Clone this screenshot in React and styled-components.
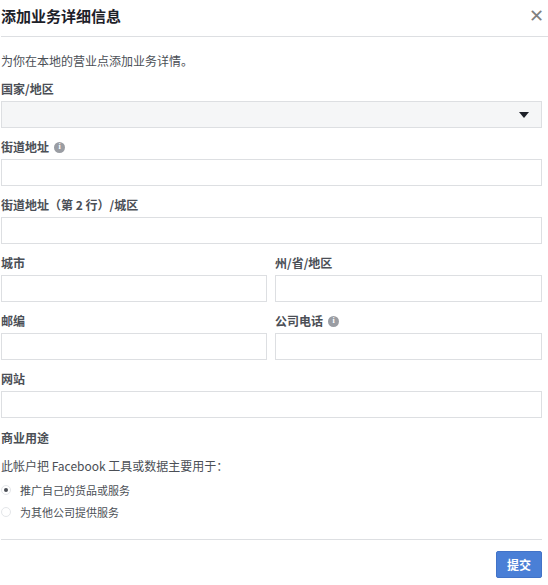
import React from "react";
import styled, { createGlobalStyle } from "styled-components";

const Global = createGlobalStyle`
  body { margin: 0; background: #fff; font-family: "Microsoft YaHei", "Noto Sans CJK SC", "Liberation Sans", sans-serif; color: #1d2129; }
`;
const Wrap = styled.div`width: 548px; height: 585px; display: flex; flex-direction: column; padding: 0 6px 0 1px; box-sizing: border-box;`;
const Header = styled.div`height: 36px; display: flex; align-items: center; justify-content: space-between; border-bottom: 1px solid #dddfe2; margin-right: -6px; padding-right: 4px;`;
const Title = styled.div`font-size: 15px; font-weight: bold; color: #1d2129; margin-top: -6px;`;
const Close = styled.div`font-size: 18px; color: #7f7f7f; margin-top: -6px; font-family: "DejaVu Sans", sans-serif; font-weight: 300;`;
const Desc = styled.div`font-size: 12px; color: #4b4f56; margin-top: 16px; line-height: 16px;`;
const Field = styled.div`display: flex; flex-direction: column; margin-top: ${p => p.$mt ?? 11}px;`;
const Label = styled.div`font-size: 12px; font-weight: bold; color: #4b4f56; height: 16px; line-height: 16px; display: flex; align-items: center; gap: 5px; margin-bottom: 4px;`;
const Info = styled.span`width: 11px; height: 11px; border-radius: 50%; background: #9a9da3; color: #fff; font-size: 8px; font-weight: bold; display: inline-flex; align-items: center; justify-content: center; font-family: "Liberation Serif", serif;`;
const Input = styled.div`height: 27px; box-sizing: border-box; border: 1px solid #dddfe2; background: ${p => p.$gray ? "#f5f6f7" : "#fff"}; display: flex; align-items: center; justify-content: flex-end; padding-right: 12px;`;
const Caret = styled.div`width: 0; height: 0; border-left: 5px solid transparent; border-right: 5px solid transparent; border-top: 6px solid #1d2129;`;
const Row = styled.div`display: grid; grid-template-columns: 266px 267px; gap: 8px; margin-top: 11px; & > div { margin-top: 0; }`;
const Section = styled.div`font-size: 12px; font-weight: bold; color: #4b4f56; margin-top: 12px; line-height: 16px;`;
const Text = styled.div`font-size: 12px; color: #4b4f56; margin-top: 12px; line-height: 16px;`;
const Radio = styled.div`display: flex; align-items: center; gap: 9px; font-size: 11px; color: #4b4f56; height: 16px; margin-top: ${p => p.$mt}px;`;
const Dot = styled.span`width: 10px; height: 10px; border-radius: 50%; border: 1px solid #e4e6e9; box-sizing: border-box; display: inline-flex; align-items: center; justify-content: center; &::after { content: ""; width: 4px; height: 4px; border-radius: 50%; background: ${p => p.$on ? "#4b4f56" : "transparent"}; }`;
const Footer = styled.div`border-top: 1px solid #dddfe2; margin-top: 19px; padding-top: 11px; display: flex; justify-content: flex-end;`;
const Button = styled.button`width: 46px; height: 27px; background: #4a7fd6; border: 1px solid #4273c8; border-radius: 2px; color: #fff; font-size: 12px; font-weight: bold; font-family: inherit;`;

export default function App() {
  return (
    <Wrap>
      <Global />
      <Header><Title>添加业务详细信息</Title><Close>✕</Close></Header>
      <Desc>为你在本地的营业点添加业务详情。</Desc>
      <Field $mt={12}><Label>国家/地区</Label><Input $gray><Caret /></Input></Field>
      <Field><Label>街道地址 <Info>i</Info></Label><Input /></Field>
      <Field><Label>街道地址（第 2 行）/城区</Label><Input /></Field>
      <Row>
        <Field><Label>城市</Label><Input /></Field>
        <Field><Label>州/省/地区</Label><Input /></Field>
      </Row>
      <Row>
        <Field><Label>邮编</Label><Input /></Field>
        <Field><Label>公司电话 <Info>i</Info></Label><Input /></Field>
      </Row>
      <Field><Label>网站</Label><Input /></Field>
      <Section>商业用途</Section>
      <Text>此帐户把 Facebook 工具或数据主要用于：</Text>
      <Radio $mt={8}><Dot $on />推广自己的货品或服务</Radio>
      <Radio $mt={6}><Dot />为其他公司提供服务</Radio>
      <Footer><Button>提交</Button></Footer>
    </Wrap>
  );
}
